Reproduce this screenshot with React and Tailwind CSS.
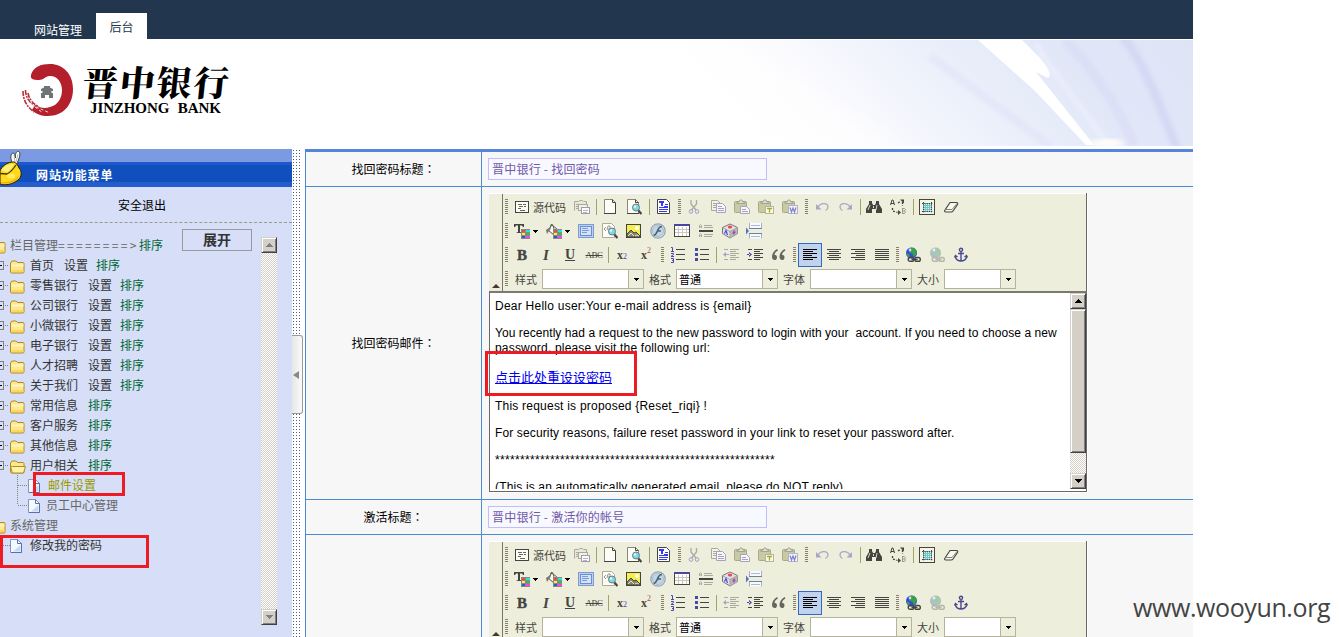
import React from "react";

const INK = "#45453f";
const MUTE = "#a9a99c";

function Lines({ rows, color = INK, h = 1 }) {
  return rows.map(([x, y, w], i) => <rect key={i} x={x} y={y} width={w} height={h} fill={color} />);
}

function Swatches({ x = 7, y = 6 }) {
  const c = ["#f04848", "#30e0e0", "#f8f040", "#40b848", "#4848e8", "#f048f0"];
  return (
    <>
      <rect x={x} y={y} width="9" height="10" fill="#8a8a82" />
      {c.map((f, i) => (
        <rect key={i} x={x + 1 + (i % 2) * 4} y={y + 1 + Math.floor(i / 2) * 3} width={i % 2 ? 4 : 3} height="2" fill={f} />
      ))}
    </>
  );
}

function Magnifier() {
  return (
    <>
      <path d="M12 11l3.500 4" stroke={INK} strokeWidth="2.200" />
      <circle cx="10" cy="8.500" r="3.500" fill="#78dce0" stroke="#778" />
      <rect x="8" y="6.500" width="2" height="2" fill="#e8ffff" />
    </>
  );
}

function Clipboard({ children }) {
  return (
    <>
      <rect x=".5" y="2.500" width="12" height="11" rx="1" fill="#c9c9a4" stroke="#a9a98c" />
      <path d="M3 4.500V3h2l1-2h2l1 2h2v1.500z" fill="#deded0" stroke="#999986" strokeWidth=".8" />
      {children}
    </>
  );
}

const sheet = (
  <>
    <path d="M2.500 .500h8l3 3v11h-11z" fill="#fdfdf5" stroke="#88887e" />
    <path d="M2 14.500h12M13.500 4v10M10.500 .500v3h3" fill="none" stroke={INK} />
  </>
);

const globe = (a, b, c) => (
  <>
    <circle cx="6.500" cy="6" r="5.500" fill={a} />
    <path d="M5 .800l4 0 2.500 3v4l-3 2-1-3-3-1zM1 6l3 1 1 3-2 .500z" fill={b} />
    <circle cx="5" cy="3" r="1.400" fill="#fff" opacity=".75" />
    <g fill="none" stroke={c} strokeWidth="1.400">
      <rect x="3.200" y="10.500" width="5.500" height="3.800" rx="1.900" />
      <rect x="9.800" y="10.500" width="5.500" height="3.800" rx="1.900" />
      <path d="M6.500 12.400h6" />
    </g>
  </>
);

const ICONS = {
  source: (
    <>
      <rect x=".5" y="2.500" width="13" height="11" fill="#fdfdf5" stroke={INK} />
      <Lines rows={[[3, 5, 4], [8, 5, 3], [4, 7, 4], [9, 7, 2], [3, 9, 3], [5, 11, 5]]} color="#66665e" />
    </>
  ),
  templates: (
    <>
      <path d="M.5 11.500v-9h4l1-1h3l1 1h3v3" fill="#e8e8da" stroke={MUTE} />
      <Lines rows={[[2, 5, 2], [2, 7, 2], [2, 9, 2]]} color={MUTE} />
      <rect x="4.500" y="5.500" width="9" height="6" fill="#f1f1e6" stroke={MUTE} />
      <rect x="7.500" y="8.500" width="8" height="6" fill="#fbfbff" stroke="#9d9dae" />
      <Lines rows={[[9, 11, 5], [9, 13, 4]]} color="#b5b5c6" />
    </>
  ),
  newpage: sheet,
  preview: (
    <>
      <path d="M1.500 .500h8l3 3v11h-11z" fill="#fdfdf5" stroke="#88887e" />
      <path d="M1 14.500h12M9.500 .500v3h3" fill="none" stroke={INK} />
      <Magnifier />
    </>
  ),
  tmpl: (
    <>
      <path d="M1.500 .500h9l3 3v11h-12z" fill="#fff" stroke={INK} />
      <Lines rows={[[3, 2, 5], [3, 3, 5], [9, 5, 3], [8, 7, 4], [3, 8, 9], [3, 10, 9], [3, 12, 8]]} color="#3838f0" />
      <rect x="5" y="3" width="2" height="4" fill="#3838f0" />
    </>
  ),
  cut: (
    <g fill="none" stroke="#a5a5b4">
      <path d="M5 1v4l5 6M10.500 1v4l-5 6" stroke="#aaaa9f" strokeWidth="1.300" />
      <circle cx="5" cy="12.500" r="1.800" stroke="#9d9dc9" />
      <circle cx="11" cy="12.500" r="1.800" stroke="#9d9dc9" />
    </g>
  ),
  copy: (
    <>
      <path d="M1.500 1.500h6l3 3v7h-9z" fill="#f3f3ea" stroke={MUTE} />
      <Lines rows={[[3, 4, 4], [3, 6, 3], [3, 8, 3]]} color={MUTE} />
      <path d="M6.500 4.500h6l3 3v6h-9z" fill="#f7f7fb" stroke="#a4a4bd" />
      <Lines rows={[[8, 7, 4], [8, 9, 6], [8, 11, 6]]} color="#a4a4bd" />
    </>
  ),
  paste: (
    <Clipboard>
      <path d="M6.500 7.500h6l3 3v4h-9z" fill="#f7f7fb" stroke="#a4a4bd" />
      <Lines rows={[[8, 10, 4], [8, 12, 6]]} color="#a4a4bd" />
    </Clipboard>
  ),
  pastetext: (
    <Clipboard>
      <rect x="7.500" y="7.500" width="8" height="7" fill="#fafae0" stroke="#b5b59a" />
      <path d="M9 9.500h5M11.500 9.500v4" stroke="#a5a540" strokeWidth="1.300" />
    </Clipboard>
  ),
  pasteword: (
    <Clipboard>
      <rect x="6.500" y="6.500" width="9" height="8" fill="#f5f5fc" stroke="#b4b4c8" />
      <path d="M8 8.500l1.500 4.500 1.500-4 1.500 4L14 8.500" fill="none" stroke="#8585cc" strokeWidth="1.300" />
    </Clipboard>
  ),
  undo: (
    <>
      <path d="M4 8c3-5 10-4 10 0 0 2-1.500 3-2.500 3.500" fill="none" stroke="#a8a8c6" strokeWidth="1.300" />
      <path d="M2 5v5.500h5.500z" fill="#a8a8c6" />
    </>
  ),
  redo: (
    <>
      <path d="M12 8C9 3 2 4 2 8c0 2 1.500 3 2.500 3.500" fill="none" stroke="#a8a8c6" strokeWidth="1.300" />
      <path d="M14 5v5.500H8.500z" fill="#a8a8c6" />
    </>
  ),
  find: (
    <>
      <path d="M3 2h3v2l1 2h2l1-2V2h3v3l3 5v4h-6v-4H6v4H0v-4l3-5z" fill={INK} />
      <path d="M4 6l-2 5M11 6l-1 5M7.500 7v2" stroke="#d4d4c8" />
    </>
  ),
  replace: (
    <>
      <path d="M.5 6l1.500-5h1l1.500 5M1 4.500h3" fill="none" stroke={INK} />
      <path d="M12.500 9v6M12.500 9.500h2l1 1-1 1.500h-2M14.500 12l1 1-1 1.500h-2" fill="none" stroke="#999990" />
      <path d="M8 4l3-2M12.500 3v4M2.500 9v3l5 1.500" fill="none" stroke={INK} strokeWidth="1.300" strokeDasharray="2 1.500" />
      <path d="M10 .500h4v4zM8 11v5l3-2.500z" fill={INK} />
    </>
  ),
  selectall: (
    <>
      <rect x=".5" y=".5" width="15" height="15" fill="#f4f4e8" stroke={INK} />
      <rect x="4" y="4" width="9" height="9" fill="#c4f0f0" />
      <path d="M3 4.500h11M3 12.500h11M4.500 3v11M12.500 3v11" stroke={INK} strokeDasharray="1.500 .700" />
      <path d="M5 6.500h7M5 8.500h7M5 10.500h7M6.500 5v7M8.500 5v7M10.500 5v7" stroke="#50b4b8" strokeWidth=".8" strokeDasharray="1.500 .600" />
    </>
  ),
  eraser: (
    <>
      <path d="M7 3.500h6.500c1 0 1.500 1 1 2L10 12c-.5.700-1 1-2 1H3c-1.500 0-1.800-1-1-2z" fill="#f8f8ee" stroke={INK} strokeWidth="1.200" />
      <path d="M2.500 10.500H9l5-6" fill="none" stroke="#85857c" />
    </>
  ),
  textcolor: (
    <>
      <path d="M0 1h10v3H9L8 2.500H6V9l1.500.500v.5H2.500v-.5L4 9V2.500H2L1 4H0z" fill="#45453f" />
      <Swatches />
    </>
  ),
  bgcolor: (
    <>
      <path d="M6 2l6 5-4 5-6-5z" fill="#fbfbf2" stroke="#55554d" />
      <path d="M3.500 7.500L5 1.500h1.500L8 6" fill="none" stroke="#66665e" />
      <path d="M0 7l3-2v3l-2 3z" fill="#77776e" />
      <Swatches />
    </>
  ),
  showblocks: (
    <>
      <rect x=".5" y="1.500" width="15" height="13" fill="#bcd0ef" stroke="#7b9bd2" />
      <rect x="2.500" y="3.500" width="11" height="9" fill="#d4e2fa" stroke="#6b8fce" />
      <Lines rows={[[4, 5, 6], [4, 7, 7], [4, 9, 5]]} color="#7c9cd6" />
    </>
  ),
  inspect: (
    <>
      <path d="M.5 .500h9l3 3v11H.5z" fill="#fdfdf5" stroke="#aaaaa0" />
      <path d="M2 6l2-2M2 6l2 2M5 7l1-4h2v3H6" fill="none" stroke="#99998f" />
      <Magnifier />
    </>
  ),
  image: (
    <>
      <rect x=".5" y="1.500" width="14" height="13" fill="#f4ee50" stroke={INK} />
      <circle cx="11" cy="5" r="2" fill="#fffef0" />
      <path d="M1 14v-3l4-4 3 3 2-1 4 4v1z" fill="#88876c" stroke={INK} />
      <path d="M2 13l3-3 3 3M9 13l2-1 2 1" stroke="#e5e5be" fill="none" />
    </>
  ),
  flash: (
    <>
      <circle cx="8" cy="8" r="7.200" fill="#dce8f0" stroke="#98a6b0" strokeWidth="1.300" />
      <circle cx="8" cy="8" r="5.500" fill="#c4d6e4" stroke="#a4bccb" />
      <path d="M12 3.500c-3 0-3.500 2-4.500 4.500S6 12 3.500 12.500M7.500 8h3.500" fill="none" stroke="#48647c" strokeWidth="1.700" />
    </>
  ),
  table: (
    <>
      <rect x=".5" y="1.500" width="15" height="12" fill="#fff" stroke={INK} />
      <rect x="0" y="1" width="16" height="2" fill="#4848a0" />
      <path d="M1 6.500h14M1 9.500h14M4.500 4v9M8.500 4v9M12.500 4v9" stroke="#c9c9bd" />
    </>
  ),
  hr: (
    <>
      <Lines rows={[[1, 7, 14], [1, 8, 14]]} />
      <Lines rows={[[6, 2, 8], [6, 4, 9], [6, 11, 9], [6, 13, 8]]} color={MUTE} />
      <path d="M1.500 5V2.500l1-1 1 1V5M1.500 3.800h2M1.500 14v-2.500l1-1 1 1V14M1.500 12.800h2" fill="none" stroke={MUTE} />
    </>
  ),
  smiley: (
    <>
      <path d="M8 1l7.500 3.500v6L8 15 .5 10.500v-6z" fill="#e4e2e0" stroke="#77777d" />
      <path d="M8 8l7.500-3.500v6L8 15z" fill="#b8b6b6" />
      <path d="M1 5l7 3.500L15 5M8 8.500v6" fill="none" stroke="#a5a5ac" />
      <ellipse cx="8" cy="4" rx="2.200" ry="1.500" fill="#f04848" />
      <path d="M2.500 10.500l1.500-3 1.500 4.500" fill="none" stroke="#4848e8" strokeWidth="1.200" />
      <path d="M12 7.500v4M10.500 10l3-1" stroke="#a040a0" strokeWidth="1.200" />
    </>
  ),
  pagebreak: (
    <>
      <path d="M3.500 0v5.500h12V0M3.500 15.500v-5h12v5" fill="#f6f9ff" stroke="#a4b2c6" />
      <path d="M3 5.500h13M3 10.500h13" stroke="#6e829d" />
      <Lines rows={[[5, 2, 9], [5, 13, 9]]} color="#a8bcd6" />
      <path d="M0 4.500L3 8l-3 3.500z" fill="#5577b8" />
    </>
  ),
  ol: (
    <>
      <Lines rows={[[6, 2, 9], [6, 7, 9], [6, 12, 9]]} />
      <path d="M1 .500h1.500V4M1 4.500h3M1 6.500h2.500v1L1 9.500h3M1 11.500h2.500v4H1M2 13.500h1.500" fill="none" stroke="#4848a8" />
    </>
  ),
  ul: (
    <>
      <Lines rows={[[6, 2, 9], [6, 7, 9], [6, 12, 9]]} />
      <path d="M1 1h3v3H1zM1 6h3v3H1zM1 11h3v3H1z" fill="#4848a8" />
    </>
  ),
  outdent: (
    <>
      <Lines rows={[[1, 2, 4], [7, 2, 9], [7, 4, 6], [7, 6, 9], [7, 8, 6], [7, 10, 9], [1, 12, 4], [7, 12, 6]]} color={MUTE} />
      <path d="M0 7.500L3 5v5zM3 7h3v1H3z" fill="#a4a4c8" />
    </>
  ),
  indent: (
    <>
      <Lines rows={[[1, 2, 4], [7, 2, 9], [7, 4, 6], [7, 6, 9], [7, 8, 6], [7, 10, 9], [1, 12, 4], [7, 12, 6]]} />
      <path d="M5 7.500L2 5v5zM0 7h3v1H0z" fill="#4848a8" />
    </>
  ),
  quote: (
    <path d="M6 2C2.500 4 1 7 1 10c0 4 5 4 5 .500C6 8.500 5 8 3.500 8 3.800 6 4.500 5 7 3.500zM13.500 2C10 4 8.500 7 8.500 10c0 4 5 4 5 .500 0-2-1-2.500-2.500-2.500.300-2 1-3 3.500-4.500z" fill="#66665f" />
  ),
  left: <Lines rows={[[1, 2, 14], [1, 4, 10], [1, 6, 14], [1, 8, 9], [1, 10, 14], [1, 12, 10]]} color="#000" />,
  center: <Lines rows={[[1, 2, 14], [3, 4, 10], [1, 6, 14], [3, 8, 10], [1, 10, 14], [3, 12, 10]]} />,
  right: <Lines rows={[[1, 2, 14], [5, 4, 10], [1, 6, 14], [6, 8, 9], [1, 10, 14], [5, 12, 10]]} />,
  justify: <Lines rows={[[1, 2, 14], [1, 4, 14], [1, 6, 14], [1, 8, 14], [1, 10, 14], [1, 12, 14]]} />,
  link: globe("#3848e0", "#38a048", INK),
  unlink: globe("#b4bcd0", "#a4ccaa", "#b5b5a9"),
  anchor: (
    <g fill="none" stroke="#484890" strokeWidth="1.400">
      <circle cx="8" cy="2.800" r="1.600" />
      <path d="M8 4.500V14M5 6.500h6M2.500 8.500v2c1 2.500 3 3.500 5.500 3.500s4.500-1 5.500-3.500v-2M1.500 10.500l1-2 2 1.500M14.500 10.500l-1-2-2 1.500" />
    </g>
  ),
};

function Icon({ name }) {
  return (
    <svg width="16" height="16" viewBox="0 0 16 16" className="shrink-0">
      {ICONS[name]}
    </svg>
  );
}

function Cell({ name, active, children }) {
  return (
    <div className={active ? "flex h-6 w-6 shrink-0 items-center justify-center border border-[#316ac5] bg-[#c1d2ee]" : "flex h-6 w-6 shrink-0 items-center justify-center"}>
      {name ? <Icon name={name} /> : children}
    </div>
  );
}

function Handle({ className = "w-[6px] pl-px" }) {
  return (
    <div className={"shrink-0 " + className}>
      <div className="h-4 w-[3px] bg-[repeating-linear-gradient(180deg,#8a7f68_0_1px,#eeeedc_1px_2px)]" />
    </div>
  );
}

function Sep({ className = "w-1 pl-[2px]" }) {
  return (
    <div className={"shrink-0 " + className}>
      <div className="h-4 w-px bg-[#a3a368]" />
    </div>
  );
}

function Glyph({ children, className = "" }) {
  return (
    <Cell>
      <span className={"font-['Liberation_Serif',serif] leading-4 text-[#45453f] " + className}>{children}</span>
    </Cell>
  );
}

function Arrow() {
  return (
    <svg width="5" height="3" viewBox="0 0 5 3" className="shrink-0" shapeRendering="crispEdges">
      <path d="M0 0h5v1H0zM1 1h3v1H1zM2 2h1v1H2z" fill="#000" />
    </svg>
  );
}

function Combo({ label, value, className }) {
  return (
    <div className="flex items-center">
      <span className="w-[27px] shrink-0 text-[11px] text-[#45453f]">{label}</span>
      <div className={"mr-[5px] flex h-[20px] shrink-0 border border-[#b4b49c] bg-white " + className}>
        <span className="flex-1 pl-[2px] text-[11px] leading-[18px] text-black">{value}</span>
        <span className="flex w-[15px] items-center justify-center border-l border-[#b4b49c] bg-[#eeeedc]">
          <Arrow />
        </span>
      </div>
    </div>
  );
}

function Toolbar() {
  return (
    <div className="flex h-[98px] border-t border-white bg-[#eeeedc]">
      <div className="flex w-[14px] shrink-0 items-end justify-center border-r border-[#77776e] pb-[3px]">
        <svg width="8" height="4" viewBox="0 0 8 4"><path d="M4 0l4 4H0z" fill="#4a3434" /></svg>
      </div>
      <div className="flex-1 pt-px pl-px">
        <div className="flex h-6 items-center">
          <Handle />
          <div className="flex w-[60px] shrink-0 items-center pl-[5px]">
            <Icon name="source" />
            <span className="pl-[2px] text-[11px] text-[#45453f]">源代码</span>
          </div>
          <Cell name="templates" />
          <Sep />
          <Cell name="newpage" />
          <Cell name="preview" />
          <Sep className="w-[6px] pl-[3px]" />
          <Cell name="tmpl" />
          <Handle className="w-[6px] pl-[2px]" />
          <Cell name="cut" />
          <Cell name="copy" />
          <Cell name="paste" />
          <Cell name="pastetext" />
          <Cell name="pasteword" />
          <Handle className="w-[8px] pl-[3px]" />
          <Cell name="undo" />
          <Cell name="redo" />
          <Sep />
          <Cell name="find" />
          <Cell name="replace" />
          <Sep className="w-[5px] pl-[3px]" />
          <Cell name="selectall" />
          <Cell name="eraser" />
        </div>
        <div className="flex h-6 items-center">
          <Handle />
          <div className="flex w-8 shrink-0 items-center gap-[3px] pl-[4px]"><Icon name="textcolor" /><Arrow /></div>
          <div className="flex w-8 shrink-0 items-center gap-[3px] pl-[4px]"><Icon name="bgcolor" /><Arrow /></div>
          <Cell name="showblocks" />
          <Cell name="inspect" />
          <Cell name="image" />
          <Cell name="flash" />
          <Cell name="table" />
          <Cell name="hr" />
          <Cell name="smiley" />
          <Cell name="pagebreak" />
        </div>
        <div className="flex h-6 items-center">
          <Handle />
          <Glyph className="text-[15px] font-bold [-webkit-text-stroke:0.4px]">B</Glyph>
          <Glyph className="text-[15px] font-bold italic">I</Glyph>
          <Glyph className="text-[14px] font-bold underline">U</Glyph>
          <Glyph className="text-[9px] tracking-[-0.5px] line-through">ABC</Glyph>
          <Sep className="w-1 pl-[2px]" />
          <Cell>
            <span className="flex font-['Liberation_Serif',serif] text-[12px] leading-4 font-bold text-[#45453f]">
              x<span className="pt-[4px] text-[8px] leading-[12px] font-normal text-[#4848a8]">2</span>
            </span>
          </Cell>
          <Cell>
            <span className="flex font-['Liberation_Serif',serif] text-[12px] leading-4 font-bold text-[#45453f]">
              x<span className="text-[8px] leading-[8px] font-normal text-[#a84848]">2</span>
            </span>
          </Cell>
          <Handle className="w-[8px] pl-[3px]" />
          <Cell name="ol" />
          <Cell name="ul" />
          <Sep className="w-[5px] pl-[2px]" />
          <Cell name="outdent" />
          <Cell name="indent" />
          <Cell name="quote" />
          <Handle className="w-[7px] pl-[2px]" />
          <Cell name="left" active />
          <Cell name="center" />
          <Cell name="right" />
          <Cell name="justify" />
          <Handle className="w-[7px] pl-[2px]" />
          <Cell name="link" />
          <Cell name="unlink" />
          <Cell name="anchor" />
        </div>
        <div className="flex h-6 items-center">
          <Handle className="w-[11px] pl-px" />
          <Combo label="样式" className="w-[102px]" />
          <Combo label="格式" value="普通" className="w-[102px]" />
          <Combo label="字体" className="w-[102px]" />
          <Combo label="大小" className="w-[72px]" />
        </div>
      </div>
    </div>
  );
}

const BTN = "flex h-4 w-4 shrink-0 items-center justify-center border border-t-[#d4d0c8] border-l-[#d4d0c8] border-r-[#404040] border-b-[#404040] bg-[#d4d0c8] shadow-[inset_1px_1px_0_#fff,inset_-1px_-1px_0_#808080]";
const TRACK = "bg-[repeating-conic-gradient(#d4d0c8_0_25%,#fff_0_50%)] bg-[length:2px_2px]";

function Tri({ up, color = "#000" }) {
  return (
    <svg width="7" height="4" viewBox="0 0 7 4" shapeRendering="crispEdges">
      {[0, 1, 2, 3].map((i) => (
        <rect key={i} x={up ? 3 - i : i} y={i} width={up ? 1 + 2 * i : 7 - 2 * i} height="1" fill={color} />
      ))}
    </svg>
  );
}

function Editor() {
  return (
    <div className="w-[599px] border-r border-b border-white">
      <div className="border-r border-[#696969]">
        <Toolbar />
      </div>
      <div className="flex h-[201px] border border-t-2 border-[#696969] border-t-[#7a7a70] bg-white">
        <div className="h-[196px] flex-1 overflow-hidden pt-[6px] pl-[5px] font-['Liberation_Sans',Arial,sans-serif] text-[12px] leading-[15px] tracking-[0.22px] whitespace-nowrap text-black">
          <p className="tracking-[0.25px]">Dear Hello user:Your e-mail address is {"{email}"}</p>
          <p className="mt-[12px] tracking-[0.07px]">You recently had a request to the new password to login with your&nbsp; account. If you need to choose a new<br /><span className="tracking-[0.19px]">password, please visit the following url:</span></p>
          <p className="mt-[12px] font-['Liberation_Sans','Noto_Sans_CJK_SC',sans-serif] text-[13px] leading-[19px] tracking-normal text-[#0000ee] underline">点击此处重设设密码</p>
          <p className="mt-[12px]">This request is proposed {"{Reset_riqi}"} !</p>
          <p className="mt-[12px] tracking-[0.13px]">For security reasons, failure reset password in your link to reset your password after.</p>
          <p className="mt-[12px] tracking-[0.33px]">********************************************************</p>
          <p className="mt-[12px] tracking-[0.15px]">(This is an automatically generated email, please do NOT reply)</p>
        </div>
        <div className={"flex h-[196px] w-4 shrink-0 flex-col " + TRACK}>
          <div className={BTN}><Tri up /></div>
          <div className="h-[144px] border border-t-[#d4d0c8] border-l-[#d4d0c8] border-r-[#404040] border-b-[#404040] bg-[#d4d0c8] shadow-[inset_1px_1px_0_#fff,inset_-1px_-1px_0_#808080]" />
          <div className={"mt-auto " + BTN}><Tri /></div>
        </div>
      </div>
    </div>
  );
}

function FormRow({ label, className, children }) {
  return (
    <div className={"flex border-b border-[#4a8bd4] " + className}>
      <div className="flex w-[176px] shrink-0 items-center justify-center border-r border-[#4a8bd4] text-black">
        {label}
        {label && <span className="font-['Noto_Sans_CJK_TC',sans-serif]">：</span>}
      </div>
      <div className="flex-1">{children}</div>
    </div>
  );
}

function Field({ children }) {
  return <div className="mt-[6px] ml-[6px] h-[22px] w-[279px] border border-[#bfbfff] bg-[#f8f8ff] pl-[3px] leading-[20px] tracking-[0.23px] text-[#7058a8]">{children}</div>;
}

function Folder({ open }) {
  return (
    <svg width="16" height="14" viewBox="0 0 16 14" className="shrink-0">
      <path d="M.5 12V3l1.500-2h4l1.500 1.500h5.500c.600 0 1 .400 1 1V12c0 .500-.5 1-1 1H1.500c-.5 0-1-.5-1-1z" fill="#ffe88c" stroke="#b08a28" />
      {open ? (
        <path d="M2.500 6.500h13l-2 6.500h-11L.5 6.500z" fill="#fff3a8" stroke="#b08a28" />
      ) : (
        <>
          <path d="M1.500 5h12M1.500 6h12" stroke="#fff7cf" />
          <path d="M1.500 10h12v2h-12z" fill="#fbd75c" />
        </>
      )}
    </svg>
  );
}

function Doc() {
  return (
    <svg width="12" height="14" viewBox="0 0 12 14" className="shrink-0">
      <path d="M.5.500h7l4 4v9H.5z" fill="#f4f9ff" stroke="#7f96c4" />
      <path d="M10.500 6v6.500H3z" fill="#c4d8f8" />
      <path d="M7.500.500v4h4v9H1" fill="none" stroke="#5a70a8" />
    </svg>
  );
}

const DOT_H = "h-px shrink-0 bg-[repeating-linear-gradient(90deg,#808080_0_1px,transparent_1px_2px)]";

function Branch({ name, setup, open }) {
  return (
    <div className="flex h-5 items-center">
      <span className="mt-px flex h-[9px] w-[4px] shrink-0 items-center border border-l-0 border-[#808080]">
        <span className="h-px w-[2px] bg-black" />
      </span>
      <span className={"mx-px w-[4px] " + DOT_H} />
      <span className="flex w-[20px] shrink-0 pt-[3px]"><Folder open={open} /></span>
      <span className="text-[#333]">{name}</span>
      {setup && <span className="ml-[10px] text-[#333]">设置</span>}
      <span className={setup ? "ml-[8px] text-[#006633]" : "ml-[10px] text-[#006633]"}>排序</span>
    </div>
  );
}

function Sidebar() {
  const items = [
    ["首页", true], ["零售银行", true], ["公司银行", true], ["小微银行", true], ["电子银行", true],
    ["人才招聘", true], ["关于我们", true], ["常用信息"], ["客户服务"], ["其他信息"], ["用户相关", false, true],
  ];
  return (
    <aside className="w-[292px] shrink-0 bg-[#d6dff7]">
      <div className="h-[13px] bg-[#7b9ae1]" />
      <div className="relative flex h-[25px] items-center bg-[linear-gradient(180deg,#1f58ca_0_3px,#114fbf_3px_20px,#245ccc_20px)] pl-[36px] font-bold tracking-[0.9px] text-white">
        网站功能菜单
        <svg width="24" height="38" viewBox="0 0 24 38" className="absolute top-[-13px] left-0">
          <path d="M14 17C9 10 11 4 13 4c2 0 2 3 2.500 5C15 6 16 2 18.500 2.500 21 3 20 9 16 16z" fill="#fff" stroke="#444" />
          <path d="M14 6l1 8M18 5l-2 8" stroke="#999" strokeWidth=".7" />
          <path d="M0 22c2-5 7-9 14-9 2 1 4 3 5 6 3 3 3 9-1 12-5 4-12 6-18 4z" fill="#ffd91a" stroke="#2a2200" />
          <path d="M1 21c3-4 7-6 12-6 1 2-2 5-6 8z" fill="#fff27a" />
          <path d="M0 24.500l7 .500c4-2 7-6 9-9" fill="none" stroke="#4a3800" strokeWidth="1.300" />
          <path d="M1 33c8 1 15-2 18-7-1 6-10 10-18 8z" fill="#f0a818" />
          <ellipse cx="11" cy="27" rx="4" ry="2.500" fill="#ffee60" />
        </svg>
      </div>
      <div className="flex h-[36px] items-center justify-center border-b border-dashed border-[#999] pr-[8px] text-black">安全退出</div>
      <div className="flex items-start">
        <div className="w-[182px] shrink-0 pt-[12px] whitespace-nowrap">
          <div className="flex h-5 items-center text-[#666]">
            <span className="flex w-[10px] justify-end overflow-hidden pt-[3px] pr-[3px]"><Folder /></span>
            栏目管理<span className="w-[81px] tracking-[2.3px]">========&gt;</span><span className="text-[#006633]">排序</span>
          </div>
          {items.map(([n, s, o]) => <Branch key={n} name={n} setup={s} open={o} />)}
          <div className="flex h-5 items-center pl-[17px]">
            <span className="h-5 w-px bg-[repeating-linear-gradient(180deg,#808080_0_1px,transparent_1px_2px)]" />
            <span className={"w-[10px] " + DOT_H} />
            <span className="pt-[2px]"><Doc /></span><span className="pl-[8px] text-[#999900]">邮件设置</span>
          </div>
          <div className="flex h-5 items-center pl-[17px]">
            <span className="mb-[10px] h-[10px] w-px bg-[repeating-linear-gradient(180deg,#808080_0_1px,transparent_1px_2px)]" />
            <span className={"w-[10px] " + DOT_H} />
            <span className="pt-[2px]"><Doc /></span><span className="pl-[6px] text-[#666]">员工中心管理</span>
          </div>
          <div className="flex h-5 items-center text-[#666]">
            <span className="flex w-[10px] justify-end overflow-hidden pt-[3px] pr-[3px]"><Folder /></span>系统管理
          </div>
          <div className="flex h-5 items-center pl-[3px]">
            <span className={"w-[7px] " + DOT_H} /><span className="pt-[2px]"><Doc /></span><span className="pl-[8px] text-[#333]">修改我的密码</span>
          </div>
        </div>
        <div className="mt-[6px] flex h-[22px] w-[70px] shrink-0 items-center justify-center border border-[#999] pb-[2px] text-[14px] font-bold text-[#333]">展开</div>
        <div className={"mt-[14px] ml-[9px] flex h-[388px] w-4 shrink-0 flex-col " + TRACK}>
          <div className={BTN}><Tri up color="#808080" /></div>
          <div className={"mt-auto " + BTN}><Tri color="#808080" /></div>
        </div>
      </div>
    </aside>
  );
}

function Logo() {
  return (
    <div className="flex pt-[23px] pl-[21px]">
      <svg width="54" height="54" viewBox="0 0 54 54" className="shrink-0">
        <path d="M10 12C12 4 20 1 29 1c13 0 23 10 23 25 0 16-10 27-25 27-7 0-12-2-16-6l3-5c5 3 10 4 15 2 8-2 12-9 12-17 0-9-6-15-13-14-5 1-5 4-10 4-6 0-9-1-8-5z" fill="#b31f2a" />
        <path d="M2 28c0 9 4 16 11 21M4.500 27c0 7 4 13 11 17M7 30c1 6 5 11 11 14" fill="none" stroke="#b8303c" strokeWidth="1.600" strokeDasharray="5 1 2 1" />
        <path d="M10 41l12 9M15 44l14 6M9 37l6 8" stroke="#fff" strokeWidth=".8" strokeDasharray="3 2" />
        <path d="M20 26l3-1.500V23h6v1.500l3 1.500v2h-1.500v2H32v5h-4v-3h-4v3h-4v-5h1.500v-2H20z" fill="#6f7577" />
      </svg>
      <div className="ml-[8px] w-[150px] text-black">
        <div className="h-[38px] font-['Noto_Serif_CJK_SC','Noto_Sans_CJK_SC',serif] text-[35px] leading-[36px] font-black tracking-[2px] whitespace-nowrap [transform:skewX(-6deg)]">晋中银行</div>
        <div className="ml-[7px] font-['Liberation_Serif',serif] text-[15px] leading-[15px] font-bold tracking-[-0.1px] whitespace-nowrap [word-spacing:5px]">JINZHONG BANK</div>
      </div>
    </div>
  );
}

function Streaks() {
  return (
    <svg width="513" height="106" viewBox="0 0 513 106" className="absolute top-0 right-0">
      <defs>
        <linearGradient id="sky" x1="0" x2="1" y1=".2" y2="0">
          <stop offset="0" stopColor="#fff" />
          <stop offset=".2" stopColor="#fbfbfe" />
          <stop offset=".5" stopColor="#eaeffa" />
          <stop offset=".75" stopColor="#e1e6f8" />
          <stop offset="1" stopColor="#dfe3f6" />
        </linearGradient>
        <filter id="soft"><feGaussianBlur stdDeviation="2" /></filter>
        <filter id="softer"><feGaussianBlur stdDeviation="8" /></filter>
      </defs>
      <rect width="513" height="106" fill="url(#sky)" />
      <path d="M60 0L230 116H-20V-20z" fill="#fff" opacity=".5" filter="url(#softer)" />
      <path d="M250 16l120 90" stroke="#dde1f8" strokeWidth="8" opacity=".5" filter="url(#soft)" />
      <path d="M385 0q40 40 70 106" fill="none" stroke="#d5d9f5" strokeWidth="10" opacity=".5" filter="url(#soft)" />
      <path d="M298 0h44l18 18q14 16 8 20l-12-6 58 73h-8L354 50z" fill="#fff" />
      <path d="M356 4l12 20 60 80" fill="none" stroke="#f4f5ff" strokeWidth="2" filter="url(#soft)" />
      <path d="M442 -4q22 24 56 116" fill="none" stroke="#cfd2f3" strokeWidth="9" opacity=".65" filter="url(#soft)" />
      <ellipse cx="427" cy="103" rx="17" ry="4" fill="#fffef8" filter="url(#soft)" />
    </svg>
  );
}

export default function App() {
  return (
    <div className="relative h-[637px] w-[1339px] overflow-hidden bg-white font-['Noto_Sans_CJK_SC',sans-serif] text-[12px] leading-[16px]">
      <div className="flex h-[637px] w-[1193px] flex-col">
        <header className="flex h-[39px] shrink-0 bg-[#22374d]">
          <span className="w-[96px] pt-[22px] pl-[34px] text-white">网站管理</span>
          <span className="mt-[13px] h-[26px] w-[51px] bg-white pt-[6px] text-center text-[#22374d]">后台</span>
        </header>
        <div className="relative mt-px h-[106px] shrink-0">
          <Streaks />
          <Logo />
        </div>
        <div className="mt-[3px] flex flex-1 overflow-hidden">
          <Sidebar />
          <div className="flex w-[13px] shrink-0 items-center bg-[radial-gradient(circle,#4d6080_0.5px,transparent_0.9px)] bg-[length:3px_3px] bg-[position:0px_0px] pr-[4px] [background-clip:content-box]">
            <div className="mt-[-37px] flex h-[79px] w-[11px] shrink-0 items-center rounded-r-[3px] border border-l-0 border-[#999] bg-[linear-gradient(90deg,#e6e6e6,#fafafa)] pl-px">
              <svg width="6" height="8" viewBox="0 0 6 8"><path d="M6 0v8L0 4z" fill="#888" /></svg>
            </div>
          </div>
          <main className="flex-1 border-t-3 border-l border-[#4a8bd4] border-t-[#5485d8] bg-[#f7f7f7]">
            <FormRow label="找回密码标题" className="h-[35px]"><Field>晋中银行 - 找回密码</Field></FormRow>
            <FormRow label="找回密码邮件" className="h-[313px]">
              <div className="pt-[6px] pl-[7px]"><Editor /></div>
            </FormRow>
            <FormRow label="激活标题" className="h-[35px]"><Field>晋中银行 - 激活你的帐号</Field></FormRow>
            <FormRow label="" className="h-[313px]">
              <div className="pt-[6px] pl-[7px]"><Editor /></div>
            </FormRow>
          </main>
        </div>
      </div>
      <div className="absolute top-[472px] left-[33px] h-[24px] w-[92px] border-3 border-[#ed1c24]" />
      <div className="absolute top-[535px] left-0 h-[33px] w-[149px] border-3 border-[#ed1c24]" />
      <div className="absolute top-[351px] left-[485px] h-[45px] w-[152px] border-3 border-[#ed1c24]" />
      <div className="absolute top-[590px] left-[1133px] font-['Open_Sans',sans-serif] text-[25px] leading-[34px] tracking-[-0.4px] whitespace-nowrap text-[#444]">www.wooyun.org</div>
    </div>
  );
}
